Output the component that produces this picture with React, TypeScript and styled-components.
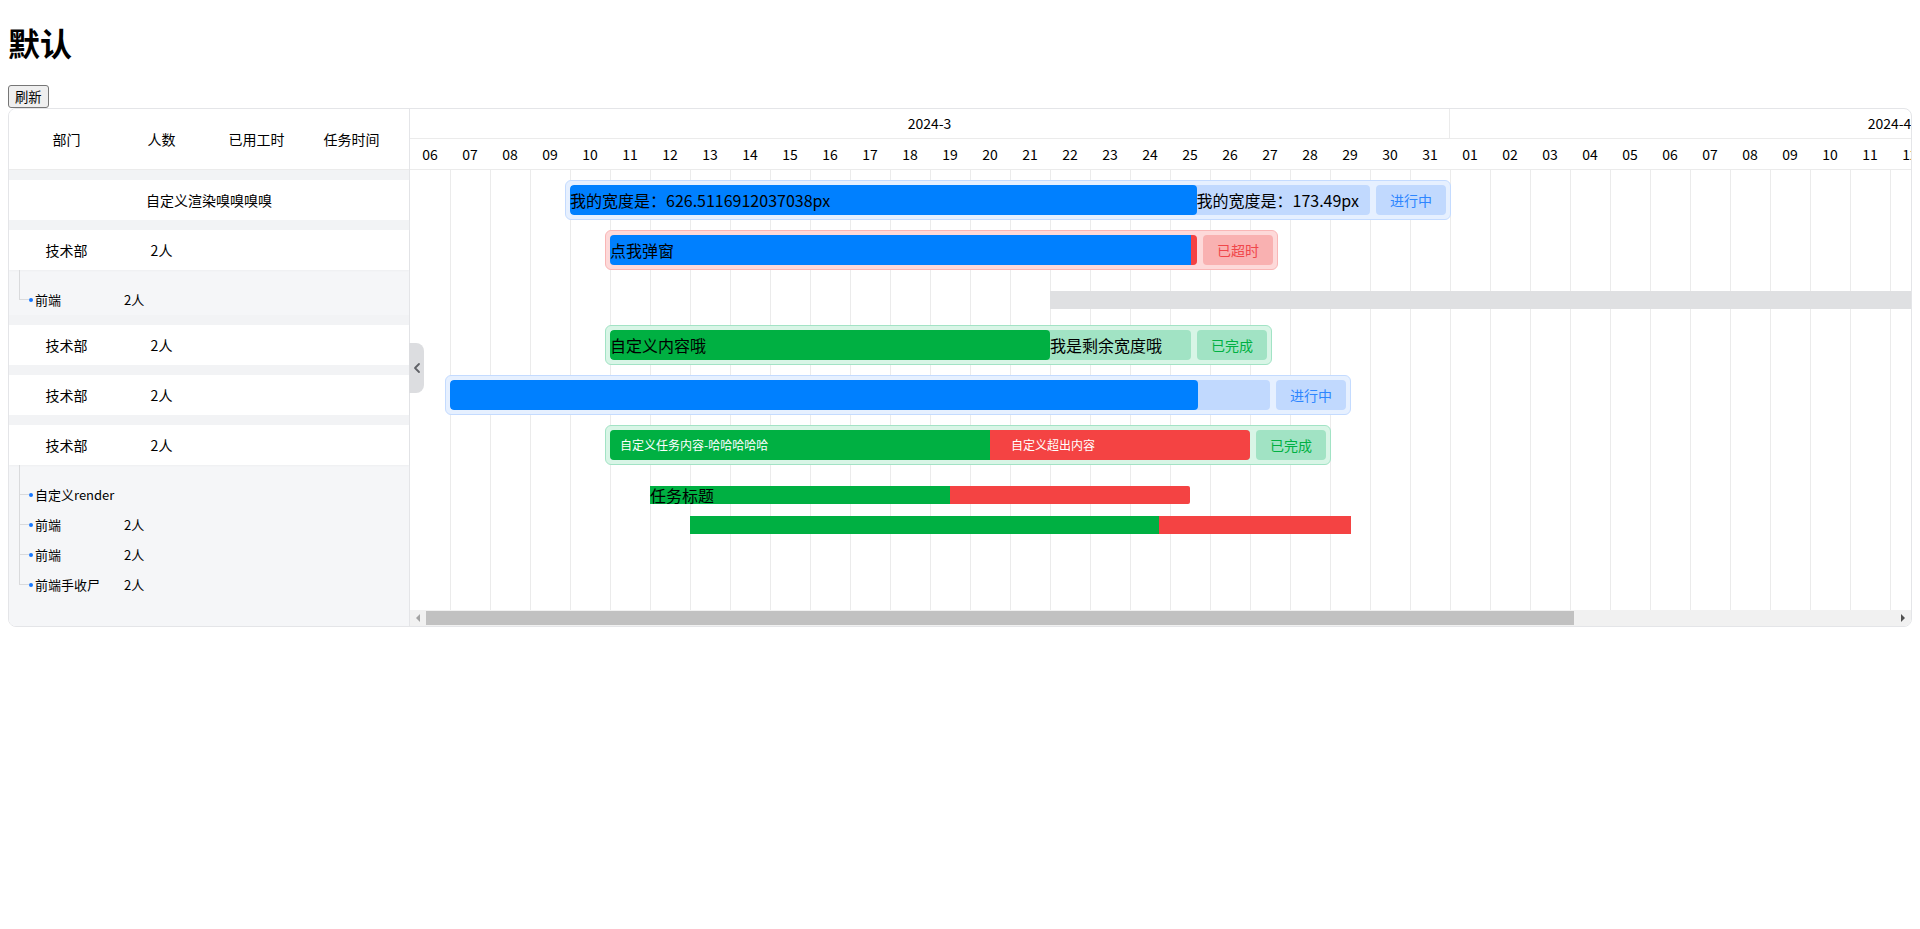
import React from "react";
import styled, { createGlobalStyle } from "styled-components";

const DAY = 40;
const TOTAL_DAYS = 48;
const VIEW_WIDTH = 1500;

const GlobalStyle = createGlobalStyle`
  html, body { background: #fff; color-scheme: light; }
  body {
    margin: 0;
    font-family: "Noto Sans CJK SC", "Noto Sans", sans-serif;
    color: #000;
  }
`;

type ToneKey = "blue" | "red" | "green";

const tones: Record<ToneKey, { box: string; edge: string; track: string; chip: string; chipText: string }> = {
  blue: { box: "#e6f0ff", edge: "#c4dbff", track: "#c1d9fe", chip: "#c1d9fe", chipText: "#2e86ff" },
  red: { box: "#fdd9d9", edge: "#f9b6b6", track: "#fbc4c4", chip: "#f9b1b1", chipText: "#f0474a" },
  green: { box: "#d8f5e6", edge: "#a2e3c5", track: "#a1e3c4", chip: "#a1e3c4", chipText: "#00b042" },
};

const FILL = { blue: "#0080ff", red: "#f44343", green: "#00b042", gray: "#dfe0e2" };

/* ---------- page chrome ---------- */

const Page = styled.div`
  display: flow-root;
  padding: 21.44px 8px 8px;
`;

const Title = styled.h1`
  margin: 0 0 21.44px;
  font-size: 32px;
  line-height: 42px;
  font-weight: 700;
  font-family: "Noto Sans CJK SC", sans-serif;
`;

const RefreshButton = styled.button`
  display: block;
  height: 23px;
  padding: 0 6px;
  font-size: 13.33px;
  line-height: 21px;
  font-family: "Noto Sans CJK SC", sans-serif;
  color: #000;
  background: #efefef;
  border: 1px solid #767676;
  border-radius: 3px;
`;

/* ---------- gantt frame ---------- */

const GanttFrame = styled.div`
  position: relative;
  display: flex;
  height: 519px;
  box-sizing: border-box;
  border: 1px solid #e4e5e8;
  border-radius: 8px;
  overflow: hidden;
`;

const CollapseHandle = styled.div`
  position: absolute;
  left: 400px;
  top: 234px;
  width: 15px;
  height: 50px;
  border-radius: 0 8px 8px 0;
  background: #dcdde0;
  display: flex;
  align-items: center;
  justify-content: center;
  z-index: 3;
`;

/* ---------- left table ---------- */

const TablePane = styled.div`
  flex: none;
  width: 400px;
  border-right: 1px solid #e4e5e8;
  display: flex;
  flex-direction: column;
  background: #f5f6f8;
`;

const TableHead = styled.div`
  flex: none;
  height: 61px;
  box-sizing: border-box;
  border-bottom: 1px solid #ebebeb;
  background: #fff;
  display: grid;
  grid-template-columns: repeat(4, 95px);
  padding-left: 10px;
  align-items: center;
  font-size: 14px;
`;

const Cell = styled.div`
  text-align: center;
  white-space: nowrap;
`;

const TableBody = styled.div`
  flex: 1;
  background: #f5f6f8;
`;

const GroupGap = styled.div`
  height: 10px;
  background: #f2f3f5;
`;

const GroupRow = styled.div<{ $merged?: boolean }>`
  height: 40px;
  background: #fff;
  display: grid;
  grid-template-columns: ${(p) => (p.$merged ? "1fr" : "repeat(4, 95px)")};
  padding-left: ${(p) => (p.$merged ? 0 : 10)}px;
  align-items: center;
  font-size: 14px;
  box-shadow: 0 1px 2px rgba(0, 0, 0, 0.03);
`;

const ChildList = styled.div`
  position: relative;
  margin-left: 10px;
  padding-top: 15px;

  &::before {
    content: "";
    position: absolute;
    left: 0;
    top: 0;
    bottom: 15px;
    width: 1px;
    background: #d9dadc;
  }
`;

const ChildRow = styled.div`
  height: 30px;
  display: grid;
  grid-template-columns: 10px 4px 91px auto;
  align-items: center;
  font-size: 13px;
`;

const Tick = styled.span`
  height: 1px;
  background: #d9dadc;
`;

const Dot = styled.span`
  width: 4px;
  height: 4px;
  border-radius: 50%;
  background: #1677ff;
`;

const ChildName = styled.span`
  padding-left: 2px;
  white-space: nowrap;
`;

/* ---------- timeline ---------- */

const GanttColumn = styled.div`
  flex: 1;
  min-width: 0;
  display: flex;
  flex-direction: column;
`;

const GanttViewport = styled.div`
  flex: 1;
  min-height: 0;
  overflow: hidden;
`;

const Timeline = styled.div`
  width: ${TOTAL_DAYS * DAY}px;
  height: 100%;
  display: flex;
  flex-direction: column;
`;

const TimeHead = styled.div`
  flex: none;
  height: 61px;
  box-sizing: border-box;
  border-bottom: 1px solid #ebebeb;
  display: flex;
  flex-direction: column;
  font-size: 14px;
`;

const MonthRow = styled.div`
  height: 30px;
  box-sizing: border-box;
  border-bottom: 1px solid #ebebeb;
  display: flex;
`;

const MonthCell = styled.div<{ $days: number }>`
  flex: none;
  width: ${(p) => p.$days * DAY}px;
  box-sizing: border-box;
  border-right: 1px solid #ebebeb;
  text-align: center;
  line-height: 29px;
`;

const DayRow = styled.div`
  height: 30px;
  display: flex;
`;

const DayCell = styled.div`
  flex: none;
  width: ${DAY}px;
  text-align: center;
  line-height: 30px;
`;

const TimeBody = styled.div`
  flex: 1;
  background:
    linear-gradient(#fff, #fff) 0 0 / 1px 100% no-repeat,
    repeating-linear-gradient(to right, #ebebeb 0 1px, transparent 1px ${DAY}px);
`;

const LaneGap = styled.div`
  height: 10px;
`;

const Lane = styled.div`
  position: relative;
  height: 40px;
`;

const ChildLanes = styled.div`
  padding-top: 15px;
`;

const ChildLane = styled.div`
  position: relative;
  height: 30px;
`;

/* ---------- horizontal scrollbar ---------- */

const ScrollBar = styled.div`
  flex: none;
  height: 16px;
  display: grid;
  grid-template-columns: 16px 1fr 16px;
  background: #f1f1f1;
`;

const ScrollArrow = styled.div<{ $dir: "left" | "right"; $active?: boolean }>`
  display: flex;
  align-items: center;
  justify-content: center;

  &::before {
    content: "";
    width: 0;
    height: 0;
    border-top: 4px solid transparent;
    border-bottom: 4px solid transparent;
    ${(p) =>
      p.$dir === "left"
        ? `border-right: 4px solid ${p.$active ? "#505050" : "#a3a3a3"};`
        : `border-left: 4px solid ${p.$active ? "#505050" : "#a3a3a3"};`}
  }
`;

const ScrollTrack = styled.div`
  display: flex;
  align-items: center;
`;

const ScrollThumb = styled.div`
  height: 14px;
  background: #c1c1c1;
`;

/* ---------- task bars ---------- */

const TaskBox = styled.div<{ $tone: ToneKey }>`
  position: absolute;
  top: 0;
  height: 40px;
  box-sizing: border-box;
  display: flex;
  gap: 6px;
  padding: 4px;
  border: 1px solid ${(p) => tones[p.$tone].edge};
  border-radius: 6px;
  background: ${(p) => tones[p.$tone].box};
`;

const Track = styled.div<{ $tone: ToneKey; $width: number }>`
  flex: none;
  width: ${(p) => p.$width}px;
  height: 30px;
  display: flex;
  border-radius: 4px;
  overflow: hidden;
  background: ${(p) => tones[p.$tone].track};
`;

const Segment = styled.div<{ $color: string; $pill?: boolean; $small?: boolean; $pad?: number; $light?: boolean }>`
  flex: none;
  height: 30px;
  box-sizing: border-box;
  padding-left: ${(p) => p.$pad ?? 0}px;
  border-radius: ${(p) => (p.$pill ? "4px" : "0")};
  background: ${(p) => p.$color};
  color: ${(p) => (p.$light ? "#fff" : "#000")};
  font-size: ${(p) => (p.$small ? 12 : 16)}px;
  line-height: 30px;
  white-space: nowrap;
`;

const Rest = styled.div`
  flex: 1;
  min-width: 0;
  font-size: 16px;
  line-height: 30px;
  white-space: nowrap;
  overflow: hidden;
`;

const StatusChip = styled.div<{ $tone: ToneKey }>`
  flex: none;
  width: 70px;
  height: 30px;
  border-radius: 4px;
  background: ${(p) => tones[p.$tone].chip};
  color: ${(p) => tones[p.$tone].chipText};
  font-size: 14px;
  display: flex;
  align-items: center;
  justify-content: center;
`;

const ThinBar = styled.div`
  position: absolute;
  top: 6px;
  height: 18px;
  display: flex;
`;

const ThinPart = styled.div<{ $color: string; $end?: boolean }>`
  flex: none;
  height: 18px;
  background: ${(p) => p.$color};
  border-radius: ${(p) => (p.$end ? "0 2px 2px 0" : "0")};
  font-size: 16px;
  line-height: 18px;
  white-space: nowrap;
  color: #000;
`;

/* ---------- data ---------- */

type Seg = { w: number; color: string; text?: string; pill?: boolean; small?: boolean; pad?: number; light?: boolean };

type Task = {
  start: number;
  width: number;
  tone: ToneKey;
  status: string;
  segments: Seg[];
  rest?: string;
};

type Thin = { start: number; parts: { w: number; color: string; text?: string }[]; rounded?: boolean };

type ChildItem = { name: string; count?: string; bar?: Thin };

type Group = {
  name?: string;
  count?: string;
  merged?: string;
  task: Task;
  children?: ChildItem[];
};

const groups: Group[] = [
  {
    merged: "自定义渲染嗅嗅嗅嗅",
    task: {
      start: 4 * DAY,
      width: 800,
      tone: "blue",
      status: "进行中",
      segments: [{ w: 626.5116912037038, color: FILL.blue, pill: true, text: "我的宽度是：626.5116912037038px" }],
      rest: "我的宽度是：173.49px",
    },
  },
  {
    name: "技术部",
    count: "2人",
    task: {
      start: 5 * DAY,
      width: 587,
      tone: "red",
      status: "已超时",
      segments: [
        { w: 581, color: FILL.blue, text: "点我弹窗" },
        { w: 6, color: FILL.red },
      ],
    },
    children: [{ name: "前端", count: "2人", bar: { start: 16 * DAY, parts: [{ w: 32 * DAY, color: FILL.gray }] } }],
  },
  {
    name: "技术部",
    count: "2人",
    task: {
      start: 5 * DAY,
      width: 581,
      tone: "green",
      status: "已完成",
      segments: [{ w: 440, color: FILL.green, pill: true, text: "自定义内容哦" }],
      rest: "我是剩余宽度哦",
    },
  },
  {
    name: "技术部",
    count: "2人",
    task: {
      start: 1 * DAY,
      width: 820,
      tone: "blue",
      status: "进行中",
      segments: [{ w: 748, color: FILL.blue, pill: true }],
    },
  },
  {
    name: "技术部",
    count: "2人",
    task: {
      start: 5 * DAY,
      width: 640,
      tone: "green",
      status: "已完成",
      segments: [
        { w: 380, color: FILL.green, small: true, light: true, pad: 10, text: "自定义任务内容-哈哈哈哈哈" },
        { w: 260, color: FILL.red, small: true, light: true, pad: 21, text: "自定义超出内容" },
      ],
    },
    children: [
      {
        name: "自定义render",
        bar: {
          start: 6 * DAY,
          rounded: true,
          parts: [
            { w: 300, color: FILL.green, text: "任务标题" },
            { w: 240, color: FILL.red },
          ],
        },
      },
      {
        name: "前端",
        count: "2人",
        bar: {
          start: 7 * DAY,
          parts: [
            { w: 469, color: FILL.green },
            { w: 192, color: FILL.red },
          ],
        },
      },
      { name: "前端", count: "2人" },
      { name: "前端手收尸", count: "2人" },
    ],
  },
];

const days = Array.from({ length: TOTAL_DAYS }, (_, i) => new Date(2024, 2, 6 + i));
const months: { label: string; days: number }[] = [];
days.forEach((d) => {
  const label = `${d.getFullYear()}-${d.getMonth() + 1}`;
  const last = months[months.length - 1];
  if (last && last.label === label) last.days += 1;
  else months.push({ label, days: 1 });
});

const thumbShare = `${((VIEW_WIDTH / (TOTAL_DAYS * DAY)) * 100).toFixed(3)}%`;

/* ---------- pieces ---------- */

function TaskBar({ task }: { task: Task }) {
  return (
    <TaskBox $tone={task.tone} style={{ left: task.start - 5 }}>
      <Track $tone={task.tone} $width={task.width}>
        {task.segments.map((s, i) => (
          <Segment
            key={i}
            $color={s.color}
            $pill={s.pill}
            $small={s.small}
            $pad={s.pad}
            $light={s.light}
            style={{ width: s.w }}
          >
            {s.text}
          </Segment>
        ))}
        {task.rest !== undefined && <Rest>{task.rest}</Rest>}
      </Track>
      <StatusChip $tone={task.tone}>{task.status}</StatusChip>
    </TaskBox>
  );
}

function ThinTask({ bar }: { bar: Thin }) {
  return (
    <ThinBar style={{ left: bar.start }}>
      {bar.parts.map((p, i) => (
        <ThinPart key={i} $color={p.color} $end={bar.rounded && i === bar.parts.length - 1} style={{ width: p.w }}>
          {p.text}
        </ThinPart>
      ))}
    </ThinBar>
  );
}

function Chevron() {
  return (
    <svg width="8" height="12" viewBox="0 0 8 12" fill="none">
      <path d="M6 2 L2 6 L6 10" stroke="#5f6166" strokeWidth="1.8" strokeLinecap="round" strokeLinejoin="round" />
    </svg>
  );
}

export default function App() {
  return (
    <Page>
      <GlobalStyle />
      <Title>默认</Title>
      <RefreshButton type="button">刷新</RefreshButton>
      <GanttFrame>
        <TablePane>
          <TableHead>
            <Cell>部门</Cell>
            <Cell>人数</Cell>
            <Cell>已用工时</Cell>
            <Cell>任务时间</Cell>
          </TableHead>
          <TableBody>
            {groups.map((g, gi) => (
              <React.Fragment key={gi}>
                <GroupGap />
                {g.merged ? (
                  <GroupRow $merged>
                    <Cell>{g.merged}</Cell>
                  </GroupRow>
                ) : (
                  <GroupRow>
                    <Cell>{g.name}</Cell>
                    <Cell>{g.count}</Cell>
                    <Cell />
                    <Cell />
                  </GroupRow>
                )}
                {g.children && (
                  <ChildList>
                    {g.children.map((c, ci) => (
                      <ChildRow key={ci}>
                        <Tick />
                        <Dot />
                        <ChildName>{c.name}</ChildName>
                        <span>{c.count}</span>
                      </ChildRow>
                    ))}
                  </ChildList>
                )}
              </React.Fragment>
            ))}
          </TableBody>
        </TablePane>

        <GanttColumn>
          <GanttViewport>
            <Timeline>
              <TimeHead>
                <MonthRow>
                  {months.map((m) => (
                    <MonthCell key={m.label} $days={m.days}>
                      {m.label}
                    </MonthCell>
                  ))}
                </MonthRow>
                <DayRow>
                  {days.map((d, i) => (
                    <DayCell key={i}>{String(d.getDate()).padStart(2, "0")}</DayCell>
                  ))}
                </DayRow>
              </TimeHead>
              <TimeBody>
                {groups.map((g, gi) => (
                  <React.Fragment key={gi}>
                    <LaneGap />
                    <Lane>
                      <TaskBar task={g.task} />
                    </Lane>
                    {g.children && (
                      <ChildLanes>
                        {g.children.map((c, ci) => (
                          <ChildLane key={ci}>{c.bar && <ThinTask bar={c.bar} />}</ChildLane>
                        ))}
                      </ChildLanes>
                    )}
                  </React.Fragment>
                ))}
              </TimeBody>
            </Timeline>
          </GanttViewport>
          <ScrollBar>
            <ScrollArrow $dir="left" />
            <ScrollTrack>
              <ScrollThumb style={{ width: thumbShare }} />
            </ScrollTrack>
            <ScrollArrow $dir="right" $active />
          </ScrollBar>
        </GanttColumn>

        <CollapseHandle>
          <Chevron />
        </CollapseHandle>
      </GanttFrame>
    </Page>
  );
}
